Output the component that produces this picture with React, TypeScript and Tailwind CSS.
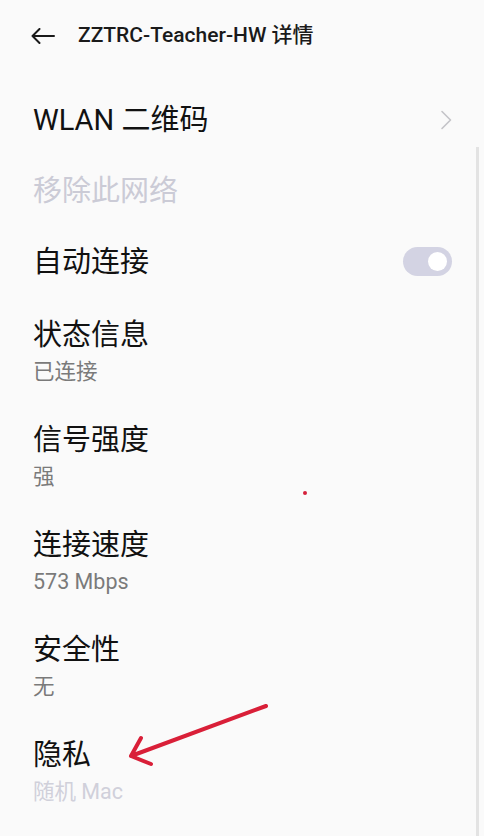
import React from "react";

const font = { fontFamily: 'Roboto, "Noto Sans CJK SC", sans-serif' };

function Single({ children, right }: { children: React.ReactNode; right?: React.ReactNode }) {
  return (
    <div className="h-[71px] flex items-center justify-between pl-[33px] pr-[32px]">
      {children}
      {right}
    </div>
  );
}

function Double({ title, sub, subClass }: { title: string; sub: string; subClass: string }) {
  return (
    <div className="h-[105px] flex flex-col pt-[20px] pl-[33px] pr-[32px]">
      <div className="text-[29px] leading-[36px] text-[#111]">{title}</div>
      <div className={"text-[21.5px] leading-[28px] mt-[5px] " + subClass}>{sub}</div>
    </div>
  );
}

export default function App() {
  return (
    <div className="relative w-[484px] h-[836px] overflow-hidden bg-[#fafafa]" style={font}>
      <div className="h-[72px] flex items-center pl-[31px]">
        <svg width="24" height="16" viewBox="0 0 24 16" fill="none" stroke="#1a1a1a" strokeWidth="2" strokeLinecap="round" strokeLinejoin="round">
          <path d="M23 8H1.5M8.5 1L1.5 8l7 7" />
        </svg>
        <div className="ml-[23px] text-[21px] font-medium text-[#1a1a1a]">ZZTRC-Teacher-HW 详情</div>
      </div>
      <div className="pt-[12px]">
        <Single
          right={
            <svg width="12" height="20" viewBox="0 0 12 20" fill="none" stroke="#c4c4c8" strokeWidth="1.6" strokeLinecap="round" strokeLinejoin="round">
              <path d="M2 1.5l8.5 8.5L2 18.5" />
            </svg>
          }
        >
          <div className="text-[29px] leading-[36px] text-[#111]">WLAN 二维码</div>
        </Single>
        <Single>
          <div className="text-[29px] leading-[36px] text-[#cbcbd6]">移除此网络</div>
        </Single>
        <Single
          right={
            <div className="w-[49px] h-[29px] rounded-full bg-[#d3d3e3] flex items-center justify-end pr-[5px]">
              <div className="w-[19px] h-[19px] rounded-full bg-white" />
            </div>
          }
        >
          <div className="text-[29px] leading-[36px] text-[#111]">自动连接</div>
        </Single>
        <Double title="状态信息" sub="已连接" subClass="text-[#7a7a7a]" />
        <Double title="信号强度" sub="强" subClass="text-[#7a7a7a]" />
        <Double title="连接速度" sub="573 Mbps" subClass="text-[#7a7a7a]" />
        <Double title="安全性" sub="无" subClass="text-[#7a7a7a]" />
        <Double title="隐私" sub="随机 Mac" subClass="text-[#d0d0da]" />
      </div>

      <div className="absolute left-[476px] top-[147px] bottom-0 w-[3px] bg-[#e3e3e3]" />
      <div className="absolute left-[303px] top-[491px] w-[4px] h-[4px] rounded-full bg-[#d4203a]" />
      <svg className="absolute left-0 top-0" width="484" height="836" fill="none" stroke="#d91f38" strokeWidth="4" strokeLinecap="round" strokeLinejoin="round">
        <path d="M266 706L131 756M141 738L131 756L151 764" />
      </svg>
    </div>
  );
}
